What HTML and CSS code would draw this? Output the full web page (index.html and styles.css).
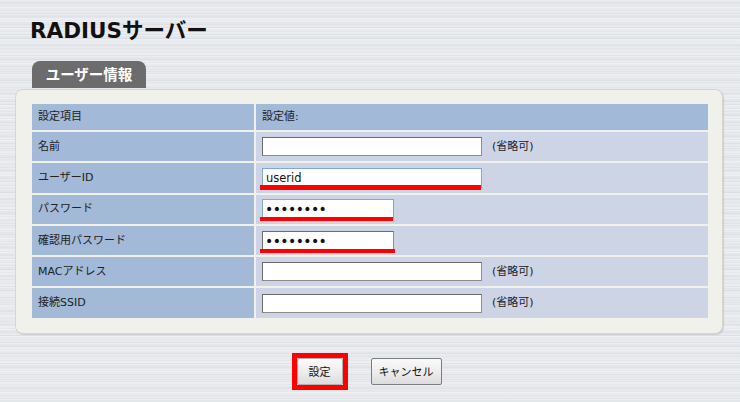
FILE: index.html
```html
<!DOCTYPE html>
<html lang="ja">
<head>
<meta charset="utf-8">
<title>RADIUSサーバー</title>
<link rel="stylesheet" href="styles.css">
</head>
<body>
<div class="page">
  <h1 class="title">RADIUSサーバー</h1>
  <div class="tab">ユーザー情報</div>
  <div class="panel">
    <div class="grid">
      <div class="cell key head">設定項目</div>
      <div class="cell head">設定値:</div>

      <div class="cell key">名前</div>
      <div class="cell val"><input class="field" type="text"><span class="note">(省略可)</span></div>

      <div class="cell key">ユーザーID</div>
      <div class="cell val"><span class="mark"><input class="field focus" type="text" value="userid"><span class="line"></span></span></div>

      <div class="cell key">パスワード</div>
      <div class="cell val"><span class="mark"><input class="field short focus pw" type="password" value="password"><span class="line"></span></span></div>

      <div class="cell key">確認用パスワード</div>
      <div class="cell val"><span class="mark"><input class="field short pw" type="password" value="password"><span class="line wide"></span></span></div>

      <div class="cell key">MACアドレス</div>
      <div class="cell val"><input class="field" type="text"><span class="note">(省略可)</span></div>

      <div class="cell key">接続SSID</div>
      <div class="cell val"><input class="field" type="text"><span class="note">(省略可)</span></div>
    </div>
  </div>
  <div class="actions">
    <span class="frame"><button class="btn ok" type="button">設定</button></span>
    <button class="btn cancel" type="button">キャンセル</button>
  </div>
</div>
</body>
</html>
```
FILE: styles.css
```css
html, body {
  margin: 0;
  padding: 0;
}
body {
  width: 740px;
  height: 402px;
  overflow: hidden;
  font-family: "DejaVu Sans", "Noto Sans CJK JP", sans-serif;
  color: #222;
  background-color: #e3e6ea;
  background-image:
    repeating-linear-gradient(to bottom,
      rgba(255,255,255,0.3) 0px, rgba(255,255,255,0.3) 1px,
      rgba(0,0,0,0) 1px, rgba(0,0,0,0) 3px,
      rgba(0,0,0,0.02) 3px, rgba(0,0,0,0.02) 4px,
      rgba(255,255,255,0.18) 4px, rgba(255,255,255,0.18) 6px,
      rgba(0,0,0,0.012) 6px, rgba(0,0,0,0.012) 7px),
    repeating-linear-gradient(to bottom,
      rgba(0,0,0,0) 0px, rgba(0,0,0,0) 5px,
      rgba(0,0,0,0.015) 5px, rgba(0,0,0,0.015) 6px,
      rgba(255,255,255,0.18) 6px, rgba(255,255,255,0.18) 11px);
}
.page {
  display: flex;
  flex-direction: column;
}
.title {
  margin: 0;
  padding: 19px 0 0 30px;
  font-family: "DejaVu Sans", "Noto Sans CJK JP", sans-serif;
  font-size: 21.5px;
  line-height: 24px;
  font-weight: bold;
  color: #111;
}
.tab {
  align-self: flex-start;
  margin: 18px 0 0 32px;
  width: 114px;
  height: 27px;
  box-sizing: border-box;
  background: #6c6c6c;
  border-radius: 8px 8px 0 0;
  color: #fff;
  font-family: "Noto Sans CJK JP", sans-serif;
  font-weight: bold;
  font-size: 14.5px;
  line-height: 26px;
  text-align: center;
}
.panel {
  margin: 1px 0 0 15px;
  width: 708px;
  box-sizing: border-box;
  background: #f1f1eb;
  border: 1px solid #d6d6cf;
  border-radius: 8px;
  box-shadow: 1px 1px 1px rgba(0,0,0,0.12);
  padding: 14px 14px 15px 16px;
}
.grid {
  display: grid;
  grid-template-columns: 222px 452px;
  grid-template-rows: 26px repeat(6, 29.3px);
  gap: 2px;
}
.cell {
  display: flex;
  align-items: center;
  background: #cdd4e6;
  font-size: 11px;
  line-height: 14px;
  padding-left: 6px;
}
.cell.key, .cell.head {
  background: #a2b9d8;
}
.field {
  box-sizing: border-box;
  width: 220px;
  height: 19px;
  margin: 0;
  padding: 0 3px;
  background: #fff;
  border: 1px solid #8c8c8c;
  border-top-color: #6a6a6a;
  border-left-color: #6a6a6a;
  border-radius: 0;
  font-family: "DejaVu Sans", sans-serif;
  font-size: 11.5px;
  color: #111;
  outline: none;
}
.field.focus {
  height: 20px;
  border: 1px solid #7fa8d8;
}
.field.short {
  width: 132px;
}
.field.pw {
  font-size: 14px;
  padding: 0 2px;
  letter-spacing: -0.6px;
}
.note {
  margin-left: 10px;
  font-size: 11px;
}
.mark {
  position: relative;
  display: inline-flex;
}
.line {
  position: absolute;
  left: -2px;
  right: 1px;
  bottom: -2px;
  height: 4.5px;
  background: #f00;
}
.line.wide {
  right: -1px;
  bottom: -3px;
}
.actions {
  display: flex;
  justify-content: center;
  align-items: center;
  gap: 23px;
  margin-top: 19px;
  padding-right: 7px;
}
.frame {
  display: flex;
  border: 5px solid #f00;
}
.btn {
  height: 27px;
  box-sizing: border-box;
  margin: 0;
  padding: 0;
  border: 1px solid #7c7c7c;
  border-radius: 2px;
  background: linear-gradient(to bottom, #fafafa 0%, #ececec 55%, #dcdcdc 100%);
  font-family: "Noto Sans CJK JP", sans-serif;
  font-size: 11px;
  color: #111;
}
.btn.ok {
  width: 46px;
  border-color: #b0b0b0;
}
.btn.cancel {
  width: 71px;
}
```
